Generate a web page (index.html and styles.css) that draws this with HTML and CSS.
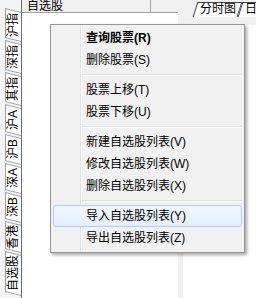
FILE: index.html
```html
<!DOCTYPE html>
<html lang="zh-CN">
<head>
  <meta charset="UTF-8" />
  <title>自选股</title>
  <link rel="stylesheet" href="styles.css">
</head>
<body>
  <div class="app">
    <!-- 左侧竖排标签 -->
    <div class="side">
      <div class="vtab t30"><span>沪指</span></div>
      <div class="vtab t30"><span>深指</span></div>
      <div class="vtab t30"><span>其指</span></div>
      <div class="vtab t28"><span>沪A</span></div>
      <div class="vtab t27"><span>沪B</span></div>
      <div class="vtab t27"><span>深A</span></div>
      <div class="vtab t27"><span>深B</span></div>
      <div class="vtab t28"><span>香港</span></div>
      <div class="vtab t41 active"><span>自选股</span></div>
    </div>

    <div class="main">
      <div class="listcol">
        <div class="head">
          <div class="hcell">自选股</div>
          <div class="hcell2"></div>
        </div>
        <div class="list"></div>
      </div>
      <div class="strip"></div>
      <div class="chartcol">
        <div class="ctabs">
          <div class="ctab">分时图</div>
          <div class="ctab last">日<i class="mark"></i></div>
        </div>
        <div class="chart">
          <div class="cbox"></div>
        </div>
      </div>
    </div>
  </div>

  <!-- 右键菜单 -->
  <div class="menu">
    <div class="item bold">查询股票(R)</div>
    <div class="item">删除股票(S)</div>
    <div class="sep"></div>
    <div class="item">股票上移(T)</div>
    <div class="item">股票下移(U)</div>
    <div class="sep"></div>
    <div class="item">新建自选股列表(V)</div>
    <div class="item">修改自选股列表(W)</div>
    <div class="item">删除自选股列表(X)</div>
    <div class="sep"></div>
    <div class="item hot">导入自选股列表(Y)</div>
    <div class="item">导出自选股列表(Z)</div>
  </div>
</body>
</html>
```

FILE: styles.css
```css
body {
  margin: 0;
  width: 256px;
  height: 298px;
  overflow: hidden;
  position: relative;
  background: #fff;
  color: #000;
  font-family: "Liberation Sans", "Noto Sans CJK SC", sans-serif;
  font-size: 12px;
  line-height: 12px;
}
.app {
  display: flex;
  height: 298px;
}
.side {
  width: 22px;
  flex-shrink: 0;
  background: #f4f4f4;
  border-right: 1px solid #6d6d6d;
  display: flex;
  flex-direction: column;
  gap: 2px;
  padding-top: 10px;
  box-sizing: border-box;
}
.vtab {
  margin-left: 5px;
  position: relative;
  display: flex;
  align-items: center;
  justify-content: center;
  z-index: 0;
}
.vtab::before {
  content: "";
  position: absolute;
  inset: 0;
  background: #fff;
  border: 1px solid #a0a0a0;
  border-right: none;
  transform: skewY(14deg);
  z-index: -1;
}
.vtab span {
  writing-mode: vertical-rl;
  text-orientation: sideways;
  transform: rotate(180deg);
  line-height: 15px;
}
.t27 { height: 27px; }
.t28 { height: 28px; }
.t30 { height: 30px; }
.t41 { height: 41px; }

.main {
  flex: 1;
  display: flex;
  min-width: 0;
}
.listcol {
  width: 156px;
  flex-shrink: 0;
  display: flex;
  flex-direction: column;
}
.head {
  height: 12px;
  background: #f0f0f0;
  border-bottom: 1px solid #a0a0a0;
  display: flex;
}
.hcell {
  width: 129px;
  padding-left: 5px;
  box-sizing: border-box;
  border-right: 1px solid #a0a0a0;
}
.hcell2 {
  flex: 1;
}
.list {
  flex: 1;
  background: #fff;
}
.strip {
  width: 5px;
  flex-shrink: 0;
  background: #f0f0f0;
}
.chartcol {
  flex: 1;
  min-width: 0;
  overflow: hidden;
  background: #f0f0f0;
  display: flex;
  flex-direction: column;
}
.ctabs {
  height: 17px;
  padding: 2px 0 0 12px;
  box-sizing: border-box;
  display: flex;
}
.ctab {
  position: relative;
  flex-shrink: 0;
  white-space: nowrap;
  padding: 0 4px 0 5px;
  height: 15px;
  line-height: 15px;
  z-index: 0;
}
.ctab::before {
  content: "";
  position: absolute;
  inset: 0;
  background: #fff;
  border: 1px solid #444;
  border-bottom: none;
  transform: skewX(-18deg);
  z-index: -1;
}
.ctab.last {
  padding-right: 8px;
}
.mark {
  display: inline-block;
  width: 2px;
  height: 6px;
  margin-left: 2px;
  background: #f0b060;
  vertical-align: middle;
}
.chart {
  flex: 1;
  margin-top: 8px;
  background: #fff;
}
.cbox {
  width: 60px;
  height: 30px;
  border-top: 1px solid #a0a0a0;
  border-right: 1px solid #a0a0a0;
}

.menu {
  position: absolute;
  left: 50px;
  top: 24px;
  width: 195px;
  box-sizing: border-box;
  padding: 2px 2px 3px;
  border: 1px solid #979797;
  background: linear-gradient(to right, #f1f1f1 29px, #e2e3e3 29px, #e2e3e3 30px, #fff 30px, #fff 31px, #f1f1f1 31px);
  box-shadow: 2px 2px 3px rgba(0, 0, 0, 0.35);
}
.item {
  height: 22px;
  line-height: 20px;
  padding-left: 32px;
  border: 1px solid transparent;
  border-radius: 3px;
  box-sizing: border-box;
  white-space: nowrap;
}
.item.bold {
  font-weight: bold;
}
.item.hot {
  border-color: #aecff7;
  background: linear-gradient(#f2f7fe, #e4eefb);
}
.sep {
  height: 8px;
  margin-left: 29px;
  display: flex;
  align-items: center;
}
.sep::after {
  content: "";
  flex: 1;
  height: 1px;
  background: #e0e0e0;
  border-bottom: 1px solid #fff;
}
```
